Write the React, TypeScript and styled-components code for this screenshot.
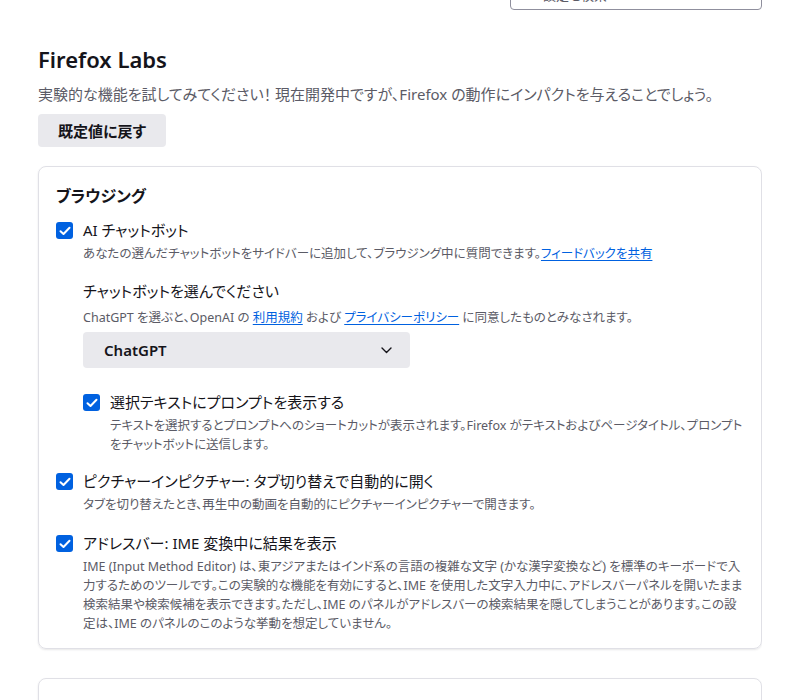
import React from "react";
import styled, { createGlobalStyle } from "styled-components";

const GlobalStyle = createGlobalStyle`
  html, body { margin: 0; padding: 0; background: #ffffff; }
  body {
    font-family: "Noto Sans", "Noto Sans CJK JP", sans-serif;
    color: #15141a;
    font-feature-settings: "palt";
    -webkit-font-smoothing: antialiased;
  }
`;

const Page = styled.div`
  width: 762px;
  padding: 0 0 40px 38px;
  overflow: hidden;
  height: 700px;
  box-sizing: border-box;
`;

const TopBar = styled.div`
  display: flex;
  justify-content: flex-end;
  margin-top: -22px;
`;

const Search = styled.div`
  width: 252px;
  height: 32px;
  box-sizing: border-box;
  border: 1px solid #8f8f9d;
  border-radius: 4px;
  display: flex;
  align-items: center;
  padding-left: 32px;
  font-size: 13px;
  color: #5b5b66;
`;

const Title = styled.h1`
  margin: 34px 0 0;
  font-size: 22px;
  line-height: 30px;
  font-weight: 600;
`;

const Intro = styled.p`
  margin: 9px 0 0;
  font-size: 15px;
  line-height: 22px;
  color: #5b5b66;
`;

const Button = styled.button`
  margin-top: 9px;
  height: 33px;
  padding: 0 20px;
  border: none;
  border-radius: 4px;
  background: #e9e9ed;
  font-family: inherit;
  font-feature-settings: "palt";
  font-size: 15px;
  font-weight: 600;
  color: #15141a;
`;

const Card = styled.section`
  margin-top: 19px;
  border: 1px solid #e0e0e6;
  border-radius: 8px;
  box-shadow: 0 1px 2px rgba(58, 57, 68, 0.12);
  padding: 17px 18px 15px 17px;
  display: flex;
  flex-direction: column;
  gap: 18px;
`;

const NextCard = styled(Card)`
  margin-top: 29px;
  height: 60px;
`;

const CardTitle = styled.h2`
  margin: 0 0 -7px;
  font-size: 16px;
  line-height: 24px;
  font-weight: 600;
`;

const Option = styled.div<{ $nested?: boolean }>`
  display: grid;
  grid-template-columns: 17px 1fr;
  column-gap: 10px;
  align-items: start;
  margin: ${(p) => (p.$nested ? "5px 0 -2px 27px" : "0")};
`;

const Box = styled.span`
  width: 17px;
  height: 17px;
  margin-top: 3px;
  border-radius: 3px;
  background: #0061e0;
  display: flex;
  align-items: center;
  justify-content: center;
`;

const Label = styled.div`
  font-size: 15px;
  line-height: 22px;
`;

const Desc = styled.div`
  margin-top: 3px;
  font-size: 12.5px;
  line-height: 19px;
  color: #5b5b66;
`;

const Link = styled.a`
  color: #0061e0;
  text-decoration: underline;
  text-underline-offset: 2px;
`;

const Sub = styled.div`
  margin-top: 17px;
  display: flex;
  flex-direction: column;
`;

const SubLabel = styled.div`
  font-size: 15px;
  line-height: 22px;
`;

const SubDesc = styled(Desc)`
  margin-top: 6px;
`;

const Select = styled.div`
  margin-top: 5px;
  width: 327px;
  height: 36px;
  box-sizing: border-box;
  border-radius: 4px;
  background: #e9e9ed;
  display: flex;
  align-items: center;
  justify-content: space-between;
  padding: 0 18px 0 21px;
  font-size: 15px;
  font-weight: 600;
`;

const Check = () => (
  <Box>
    <svg width="12" height="10" viewBox="0 0 12 10" fill="none">
      <path d="M1.5 5.2 L4.5 8 L10.5 1.8" stroke="#fff" strokeWidth="2" strokeLinecap="round" strokeLinejoin="round" />
    </svg>
  </Box>
);

const Chevron = () => (
  <svg width="11" height="7" viewBox="0 0 11 7" fill="none">
    <path d="M1 1 L5.5 5.5 L10 1" stroke="#15141a" strokeWidth="1.4" strokeLinecap="round" strokeLinejoin="round" />
  </svg>
);

export default function App() {
  return (
    <>
      <GlobalStyle />
      <Page>
        <TopBar>
          <Search>設定を検索</Search>
        </TopBar>
        <Title>Firefox Labs</Title>
        <Intro>実験的な機能を試してみてください！ 現在開発中ですが、Firefox の動作にインパクトを与えることでしょう。</Intro>
        <Button>既定値に戻す</Button>
        <Card>
          <CardTitle>ブラウジング</CardTitle>
          <Option>
            <Check />
            <div>
              <Label>AI チャットボット</Label>
              <Desc>
                あなたの選んだチャットボットをサイドバーに追加して、ブラウジング中に質問できます。<Link href="#">フィードバックを共有</Link>
              </Desc>
              <Sub>
                <SubLabel>チャットボットを選んでください</SubLabel>
                <SubDesc>
                  ChatGPT を選ぶと、OpenAI の <Link href="#">利用規約</Link> および <Link href="#">プライバシーポリシー</Link> に同意したものとみなされます。
                </SubDesc>
                <Select>
                  <span>ChatGPT</span>
                  <Chevron />
                </Select>
              </Sub>
            </div>
          </Option>
          <Option $nested>
            <Check />
            <div>
              <Label>選択テキストにプロンプトを表示する</Label>
              <Desc>
                テキストを選択するとプロンプトへのショートカットが表示されます。Firefox がテキストおよびページタイトル、プロンプトをチャットボットに送信します。
              </Desc>
            </div>
          </Option>
          <Option>
            <Check />
            <div>
              <Label>ピクチャーインピクチャー: タブ切り替えで自動的に開く</Label>
              <Desc>タブを切り替えたとき、再生中の動画を自動的にピクチャーインピクチャーで開きます。</Desc>
            </div>
          </Option>
          <Option>
            <Check />
            <div>
              <Label>アドレスバー: IME 変換中に結果を表示</Label>
              <Desc>
                IME (Input Method Editor) は、東アジアまたはインド系の言語の複雑な文字 (かな漢字変換など) を標準のキーボードで入力するためのツールです。この実験的な機能を有効にすると、IME を使用した文字入力中に、アドレスバーパネルを開いたまま検索結果や検索候補を表示できます。ただし、IME のパネルがアドレスバーの検索結果を隠してしまうことがあります。この設定は、IME のパネルのこのような挙動を想定していません。
              </Desc>
            </div>
          </Option>
        </Card>
        <NextCard />
      </Page>
    </>
  );
}
